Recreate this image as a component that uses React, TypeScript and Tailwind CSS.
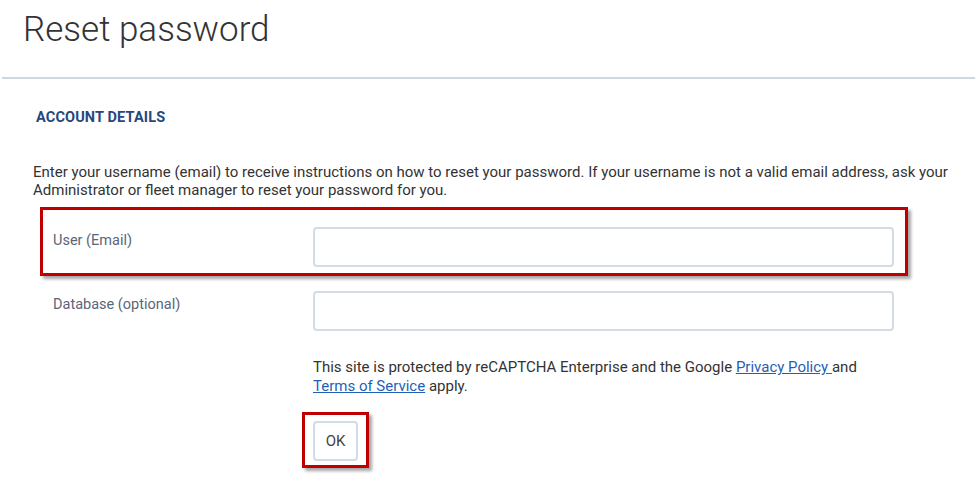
export default function App() {
  return (
    <div className="min-h-screen bg-white font-['Roboto',sans-serif] text-[#333]">
      <header className="h-[77px] pl-[23px] pt-[9px]">
        <h1 className="text-[35px] font-light leading-[42px] text-[#333]">Reset password</h1>
      </header>
      <div className="ml-[2px] h-[2px] bg-[#cfd7e4]" />

      <main className="pl-[33px]">
        <h2 className="ml-[3px] mt-[30px] text-[14.5px] font-bold uppercase tracking-[0.01em] leading-[18px] text-[#27477c]">
          Account details
        </h2>

        <p className="mt-[36px] w-[935px] text-[15px] leading-[18px] text-[#333]">
          Enter your username (email) to receive instructions on how to reset your password. If your username is not a
          valid email address, ask your Administrator or fleet manager to reset your password for you.
        </p>

        <form className="mt-[28px]">
          {/* highlighted row */}
          <div className="relative flex items-start">
            <label className="ml-[20px] w-[260px] pt-[4px] text-[14.5px] leading-[20px] text-[#5a667a]">
              User (Email)
            </label>
            <input
              type="email"
              className="h-[40px] w-[581px] rounded-[4px] border-2 border-[#d3dbe7] bg-white px-3 outline-none"
            />
            <div className="pointer-events-none absolute left-[7px] top-[-20px] h-[69px] w-[868px] border-[3px] border-[#c00000] shadow-[3px_3px_3px_rgba(0,0,0,0.35)]" />
          </div>

          <div className="mt-[24px] flex items-start">
            <label className="ml-[20px] w-[260px] pt-[4px] text-[14.5px] leading-[20px] text-[#5a667a]">
              Database (optional)
            </label>
            <input
              type="text"
              className="h-[40px] w-[581px] rounded-[4px] border-2 border-[#d3dbe7] bg-white px-3 outline-none"
            />
          </div>

          <div className="ml-[280px]">
            <p className="mt-[27px] text-[15px] leading-[19px] text-[#333]">
              This site is protected by reCAPTCHA Enterprise and the Google{" "}
              <a href="#" className="text-[#1f5fb5] underline">
                Privacy Policy{" "}
              </a>
              and
              <br />
              <a href="#" className="text-[#1f5fb5] underline">
                Terms of Service
              </a>{" "}
              apply.
            </p>

            <div className="relative mt-[25px] w-fit">
              <button
                type="button"
                className="h-[40px] w-[45px] rounded-[4px] border-2 border-[#d3dbe7] bg-white text-[15px] text-[#444]"
              >
                OK
              </button>
              <div className="pointer-events-none absolute left-[-11px] top-[-9px] h-[56px] w-[67px] border-[3px] border-[#c00000] shadow-[3px_3px_3px_rgba(0,0,0,0.35)]" />
            </div>
          </div>
        </form>
      </main>
    </div>
  );
}
